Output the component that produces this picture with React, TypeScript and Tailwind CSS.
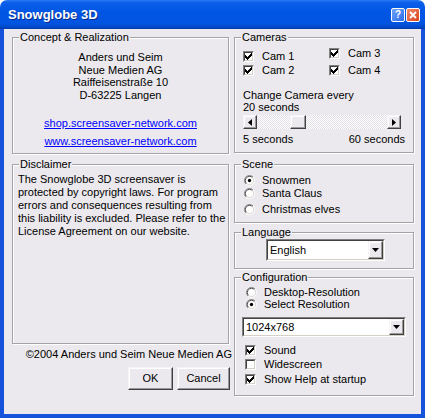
import type { ReactNode } from 'react'

// Snowglobe 3D settings dialog, drawn as a classic Windows XP window.

const CLIENT = 'bg-[#EBE9ED]'
const RAISED =
  'bg-[#EBE9ED] border border-t-[#F4F4F4] border-l-[#F4F4F4] border-r-[#404040] border-b-[#404040] shadow-[inset_-1px_-1px_0_#9A9A9A,inset_1px_1px_0_#ffffff]'
const SUNKEN_OUTER = 'border border-t-[#808080] border-l-[#808080] border-r-white border-b-white'
const SUNKEN_INNER = 'border border-t-[#404040] border-l-[#404040] border-r-[#D4D0C8] border-b-[#D4D0C8]'

function Group({ title, className = '', children }: { title: string; className?: string; children?: ReactNode }) {
  return (
    <fieldset
      className={`min-w-0 border border-[#A3A3A6] shadow-[inset_1px_1px_0_#ffffff,1px_1px_0_#ffffff] ${className}`}
    >
      <legend className={`ml-[6px] px-[1px] leading-[13px] ${CLIENT}`}>{title}</legend>
      {children}
    </fieldset>
  )
}

function Check({ checked }: { checked: boolean }) {
  return (
    <span className={`block w-[11px] h-[11px] shrink-0 ${SUNKEN_OUTER}`}>
      <span className={`flex w-full h-full bg-white ${SUNKEN_INNER}`}>
        {checked && (
          <svg width="7" height="7" viewBox="0 0 7 7" shapeRendering="crispEdges">
            <rect x="6" y="0" width="1" height="1" fill="#000" />
            <rect x="5" y="1" width="2" height="1" fill="#000" />
            <rect x="0" y="2" width="1" height="1" fill="#000" />
            <rect x="4" y="2" width="3" height="1" fill="#000" />
            <rect x="0" y="3" width="2" height="1" fill="#000" />
            <rect x="3" y="3" width="3" height="1" fill="#000" />
            <rect x="0" y="4" width="5" height="1" fill="#000" />
            <rect x="1" y="5" width="3" height="1" fill="#000" />
            <rect x="2" y="6" width="1" height="1" fill="#000" />
          </svg>
        )}
      </span>
    </span>
  )
}

function Radio({ checked }: { checked: boolean }) {
  return (
    <svg width="11" height="11" viewBox="0 0 12 12" className="shrink-0">
      <circle cx="6" cy="6" r="5.5" fill="#fff" />
      <path d="M2.1 9.9 A5.5 5.5 0 0 1 9.9 2.1" fill="none" stroke="#808080" strokeWidth="1" />
      <path d="M9.9 2.1 A5.5 5.5 0 0 1 2.1 9.9" fill="none" stroke="#ffffff" strokeWidth="1" />
      <path d="M2.8 9.2 A4.5 4.5 0 0 1 9.2 2.8" fill="none" stroke="#404040" strokeWidth="1" />
      <path d="M9.2 2.8 A4.5 4.5 0 0 1 2.8 9.2" fill="none" stroke="#D4D0C8" strokeWidth="1" />
      {checked && <circle cx="6" cy="6" r="1.8" fill="#000" />}
    </svg>
  )
}

function Combo({ value, className = '' }: { value: string; className?: string }) {
  return (
    <div className={`flex ${SUNKEN_OUTER} ${className}`}>
      <div className={`flex flex-1 bg-white ${SUNKEN_INNER}`}>
        <span className="flex flex-1 items-center pl-[2px]">{value}</span>
        <span className={`flex w-[15px] items-center justify-center ${RAISED}`}>
          <svg width="7" height="4" viewBox="0 0 7 4">
            <path d="M0 0 H7 L3.5 4 Z" fill="#000" />
          </svg>
        </span>
      </div>
    </div>
  )
}

function Arrow({ dir }: { dir: 'left' | 'right' }) {
  return (
    <span className={`flex w-[14px] h-full items-center justify-center shrink-0 ${RAISED}`}>
      <svg width="4" height="7" viewBox="0 0 4 7">
        <path d={dir === 'left' ? 'M4 0 V7 L0 3.5 Z' : 'M0 0 V7 L4 3.5 Z'} fill="#000" />
      </svg>
    </span>
  )
}

function CheckRow({ checked, label, className = '' }: { checked: boolean; label: string; className?: string }) {
  return (
    <div className={`flex h-[14px] items-center gap-[8px] ${className}`}>
      <Check checked={checked} />
      <span>{label}</span>
    </div>
  )
}

function RadioRow({ checked, label, className = '' }: { checked: boolean; label: string; className?: string }) {
  return (
    <div className={`flex items-center gap-[7px] ${className}`}>
      <Radio checked={checked} />
      <span>{label}</span>
    </div>
  )
}

function TitleBar() {
  return (
    <div className="flex h-[29px] items-center justify-between rounded-t-[7px] pl-[8px] pr-[5px] bg-[linear-gradient(180deg,#2C7BF3_0%,#0B5FE9_9%,#0056E4_40%,#0054E0_82%,#0049CC_92%,#003BAA_100%)]">
      <span className="text-[13px] font-bold text-white [text-shadow:1px_1px_0_#0A2A8A]">Snowglobe 3D</span>
      <div className="flex gap-[1px]">
        <span className="flex w-[14px] h-[14px] items-center justify-center rounded-[2px] border border-white bg-[linear-gradient(135deg,#6FA5F8,#2A6BEA)] text-[10px] font-bold leading-none text-white">
          ?
        </span>
        <span className="flex w-[14px] h-[14px] items-center justify-center rounded-[2px] border border-white bg-[linear-gradient(135deg,#F08A68,#D8431C)]">
          <svg width="8" height="8" viewBox="0 0 8 8">
            <path d="M1 1 L7 7 M7 1 L1 7" stroke="#fff" strokeWidth="1.8" />
          </svg>
        </span>
      </div>
    </div>
  )
}

export default function App() {
  return (
    <div className="flex h-[418px] w-[425px] flex-col font-['Liberation_Sans',Arial,sans-serif] text-[11px] text-black">
      <TitleBar />
      <div className="flex flex-1 border-x-4 border-b-4 border-[#1653DD] shadow-[inset_1px_0_0_#0A36B8,inset_-1px_0_0_#0A36B8]">
        <div className={`flex flex-1 pl-[8px] pt-[2px] ${CLIENT}`}>
          {/* left column */}
          <div className="flex w-[217px] flex-col">
            <Group title="Concept & Realization" className="h-[123px]">
              <div className="pt-[7px] text-center leading-[12.7px]">
                <div>Anders und Seim</div>
                <div>Neue Medien AG</div>
                <div>Raiffeisenstraße 10</div>
                <div>D-63225 Langen</div>
              </div>
              <div className="mt-[15px] text-center leading-[13px] text-[#0000FF] underline">
                shop.screensaver-network.com
              </div>
              <div className="mt-[5px] text-center leading-[13px] text-[#0000FF] underline">
                www.screensaver-network.com
              </div>
            </Group>

            <Group title="Disclaimer" className="mt-[4px] h-[186px]">
              <p className="whitespace-nowrap pl-[5px] pt-[2px] leading-[13px]">
                The Snowglobe 3D screensaver is
                <br />
                protected by copyright laws. For program
                <br />
                errors and consequences resulting from
                <br />
                this liability is excluded. Please refer to the
                <br />
                License Agreement on our website.
              </p>
            </Group>

            <div className="-mr-[3px] mt-[4px] text-right leading-[13px]">©2004 Anders und Seim Neue Medien AG</div>

            <div className="-mr-[1px] mt-[6px] flex justify-end gap-[4px]">
              <button className={`h-[23px] w-[45px] ${RAISED}`}>OK</button>
              <button className={`h-[23px] w-[53px] ${RAISED}`}>Cancel</button>
            </div>
          </div>

          {/* right column */}
          <div className="ml-[5px] flex w-[180px] flex-col">
            <Group title="Cameras" className="h-[122px]">
              <div className="flex pl-[8px]">
                <div className="w-[86px] pt-[5px]">
                  <CheckRow checked label="Cam 1" />
                  <CheckRow checked label="Cam 2" />
                </div>
                <div className="pt-[2px]">
                  <CheckRow checked label="Cam 3" />
                  <CheckRow checked label="Cam 4" className="mt-[3px]" />
                </div>
              </div>
              <div className="mt-[12px] pl-[8px] leading-[12px]">
                <div>Change Camera every</div>
                <div>20 seconds</div>
              </div>
              <div className="ml-[8px] mt-[2px] flex h-[14px] w-[158px]">
                <Arrow dir="left" />
                <div className="flex flex-1 bg-[repeating-conic-gradient(#ffffff_0%_25%,#E2E0E6_0%_50%)] bg-[length:2px_2px]">
                  <span className={`ml-[33px] h-full w-[16px] ${RAISED}`} />
                </div>
                <Arrow dir="right" />
              </div>
              <div className="mt-[4px] flex justify-between pl-[8px] pr-[8px] leading-[13px]">
                <span>5 seconds</span>
                <span>60 seconds</span>
              </div>
            </Group>

            <Group title="Scene" className="mt-[5px] h-[65px]">
              <div className="pl-[9px] pt-[3px]">
                <RadioRow checked label="Snowmen" className="h-[13px]" />
                <RadioRow checked={false} label="Santa Claus" className="h-[13px]" />
                <RadioRow checked={false} label="Christmas elves" className="mt-[3px] h-[13px]" />
              </div>
            </Group>

            <Group title="Language" className="mt-[3px] h-[43px]">
              <Combo value="English" className="ml-[31px] h-[22px] w-[119px]" />
            </Group>

            <Group title="Configuration" className="mt-[2px] h-[125px]">
              <div className="pl-[11px] pt-[2px]">
                <RadioRow checked={false} label="Desktop-Resolution" className="h-[12px]" />
                <RadioRow checked label="Select Resolution" className="h-[12px]" />
              </div>
              <Combo value="1024x768" className="ml-[7px] mt-[7px] h-[20px] w-[164px]" />
              <div className="mt-[6px] pl-[10px]">
                <CheckRow checked label="Sound" />
                <CheckRow checked={false} label="Widescreen" />
                <CheckRow checked label="Show Help at startup" className="mt-[1px]" />
              </div>
            </Group>
          </div>
        </div>
      </div>
    </div>
  )
}
